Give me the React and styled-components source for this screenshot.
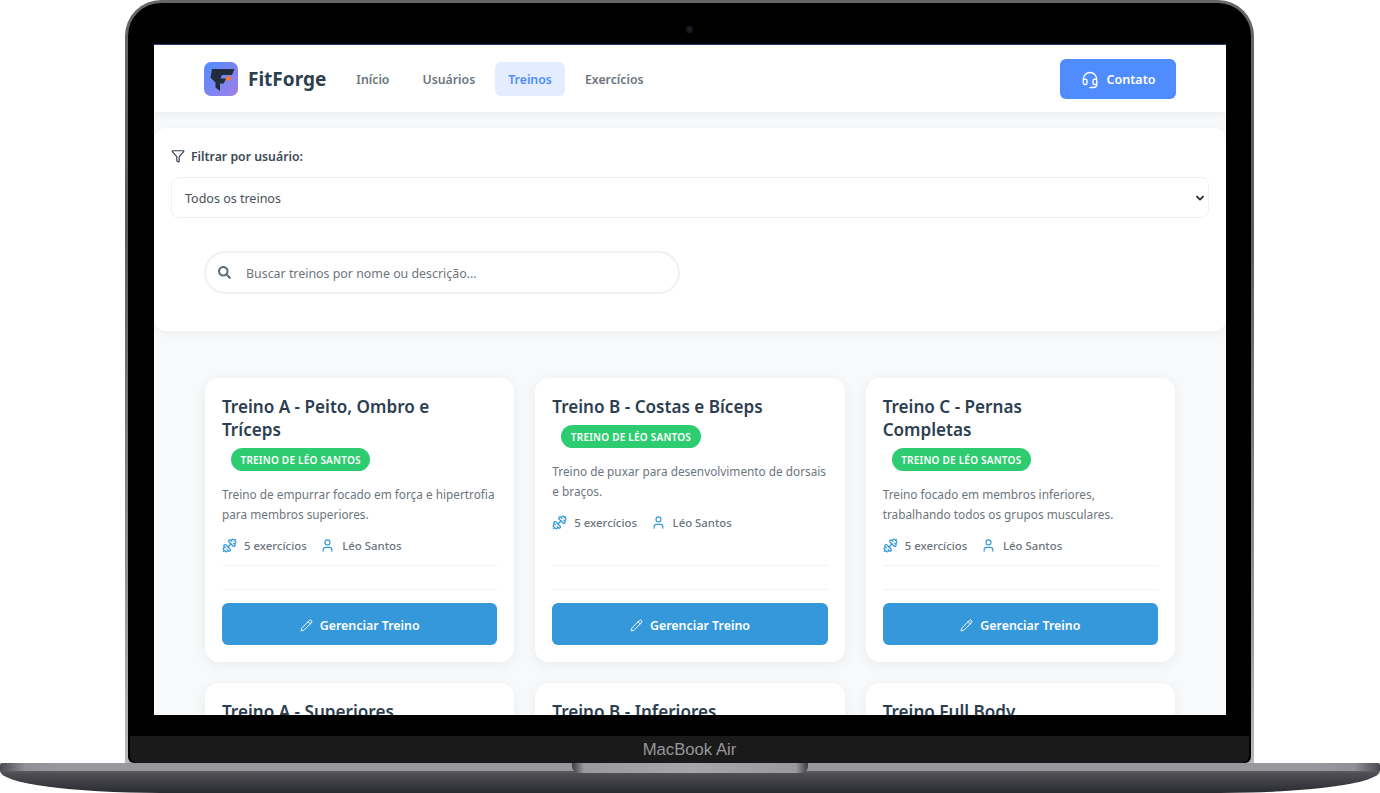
import React from "react";
import styled, { createGlobalStyle } from "styled-components";
import { Funnel, Headset, Dumbbell, User, Pencil } from "lucide-react";
import { FaSearch } from "react-icons/fa";

const Global = createGlobalStyle`
  html, body { margin: 0; padding: 0; background: #fff; }
  body { width: 1380px; height: 793px; overflow: hidden; font-family: "Noto Sans", "Open Sans", sans-serif; }
  * { box-sizing: border-box; }
`;

const chevron = "data:image/svg+xml;utf8,<svg xmlns='http://www.w3.org/2000/svg' width='10' height='6' viewBox='0 0 10 6'><path d='M1.5 1.2 5 4.6 8.5 1.2' fill='none' stroke='%23222' stroke-width='1.7'/></svg>";

const Device = styled.div`
  width: 1380px;
  height: 793px;
  display: flex;
  flex-direction: column;
  align-items: center;
`;
const Lid = styled.div`
  width: 1129px;
  height: 763px;
  flex: none;
  margin-left: -1px;
  padding: 3px 3px 0;
  border-radius: 36px 36px 0 0;
  background: linear-gradient(180deg, #67676b 0%, #5c5c60 30%, #8f8f94 75%, #b9b9bd 100%);
`;
const Bezel = styled.div`
  height: 760px;
  display: flex;
  flex-direction: column;
  border-radius: 33px 33px 6px 6px;
  background: #000;
`;
const CameraBar = styled.div`
  height: 42px;
  flex: none;
  display: flex;
  align-items: center;
  justify-content: center;
  padding-top: 10px;
`;
const Camera = styled.span`
  width: 7px;
  height: 7px;
  border-radius: 50%;
  background: #1d2128;
  box-shadow: inset 0 0 0 1.5px #14161b;
`;
const Screen = styled.div`
  height: 670px;
  flex: none;
  margin: 0 25px 0 26px;
  overflow: hidden;
  background: #f8f9fa;
  box-shadow: 0 -1px 0 rgba(70, 110, 210, 0.55);
`;
const Chin = styled.div`
  height: 27px;
  margin: 21px 2px 0;
  padding-top: 1px;
  flex: none;
  display: flex;
  align-items: center;
  justify-content: center;
  border-radius: 0 0 8px 8px;
  background: #1a1a1a;
  color: #97979a;
  font-family: "Liberation Sans", sans-serif;
  font-size: 16.7px;
`;
const Base = styled.div`
  position: relative;
  width: 1380px;
  height: 30px;
  flex: none;
`;
const BaseTop = styled.div`
  height: 8px;
  border-radius: 2px 2px 0 0;
  background: linear-gradient(90deg, #4a4a50 0, #8f8f95 25px, #98989d 60px, #97979c 1320px, #8f8f95 1355px, #4a4a50 1380px);
`;
const BaseBottom = styled.div`
  height: 22px;
  border-radius: 0 0 160px 160px / 0 0 22px 22px;
  background: linear-gradient(180deg, #5b5b60 0, #4d4d53 3px, #3d3d44 12px, #2a2a31 22px);
`;
const Notch = styled.div`
  position: absolute;
  top: 0;
  left: 572px;
  width: 236px;
  height: 10px;
  border-radius: 0 0 7px 7px;
  background: linear-gradient(90deg, #3d3d42 0, #99999e 12px, #a6a6ab 50%, #99999e 224px, #3d3d42 100%);
`;

const Nav = styled.header`
  height: 67px;
  display: flex;
  align-items: center;
  padding: 0 50px;
  background: #fff;
  box-shadow: 0 2px 10px rgba(0, 0, 0, 0.06);
`;
const Brand = styled.div`
  display: flex;
  align-items: center;
  gap: 10px;
  margin-right: 17px;
  color: #2c3e50;
  font-size: 19px;
  font-weight: 700;
`;
const NavList = styled.nav`
  display: flex;
  gap: 7px;
  flex: 1;
`;
const NavItem = styled.a`
  height: 34px;
  display: flex;
  align-items: center;
  padding: 2px 13px 0;
  border-radius: 6px;
  font-size: 12.3px;
  font-weight: 600;
  color: ${(p) => (p.$active ? "#4f8cff" : "#6c757d")};
  background: ${(p) => (p.$active ? "#e3edff" : "transparent")};
`;
const ContactButton = styled.button`
  width: 116px;
  height: 40px;
  display: flex;
  align-items: center;
  justify-content: center;
  gap: 8px;
  padding: 2px 0 0;
  border: 0;
  border-radius: 6px;
  background: #4f8cff;
  color: #fff;
  font-family: inherit;
  font-size: 12.5px;
  font-weight: 600;
`;

const FilterPanel = styled.section`
  height: 203px;
  margin-top: 16px;
  padding: 17px;
  border-radius: 12px;
  background: #fff;
  box-shadow: 0 2px 8px rgba(0, 0, 0, 0.05);
`;
const FilterLabel = styled.label`
  height: 22px;
  display: flex;
  align-items: center;
  gap: 6px;
  color: #3b4855;
  font-size: 12.3px;
  font-weight: 600;
`;
const Select = styled.select`
  width: 100%;
  height: 41px;
  margin-top: 10px;
  padding: 2px 13px 0;
  appearance: none;
  border: 1px solid #eef0f3;
  border-radius: 8px;
  background: #fff url("${chevron}") no-repeat right 3px center;
  color: #495057;
  font-family: inherit;
  font-size: 12.5px;
  outline: none;
`;
const SearchBox = styled.div`
  width: 476px;
  height: 43px;
  margin: 33px 0 0 33px;
  display: flex;
  align-items: center;
  gap: 15px;
  padding: 2px 12px 0;
  border: 2px solid #eff1f4;
  border-radius: 22px;
  background: #fff;
  color: #6c757d;
  font-size: 12.4px;
`;
const SearchIcon = styled(FaSearch)`
  color: #5f6f7e;
  font-size: 13px;
  flex: none;
  margin-top: -2px;
`;

const CardGrid = styled.div`
  display: grid;
  grid-template-columns: repeat(3, 1fr);
  gap: 21px;
  margin-top: 47px;
  padding: 0 51px;
`;
const Card = styled.article`
  min-height: 284px;
  display: flex;
  flex-direction: column;
  padding: 17px;
  border-radius: 14px;
  background: #fff;
  box-shadow: 0 3px 14px rgba(0, 0, 0, 0.06);
`;
const Title = styled.h3`
  margin: 0;
  padding-right: 50px;
  color: #2c3e50;
  font-size: 17.1px;
  font-weight: 600;
  line-height: 23px;
`;
const Badge = styled.span`
  align-self: flex-start;
  height: 23px;
  display: inline-flex;
  align-items: center;
  margin: 7px 0 0 9px;
  padding: 0 9.5px;
  border-radius: 12px;
  background: #2ecc71;
  color: #fff;
  font-size: 10px;
  font-weight: 600;
  letter-spacing: 0.22px;
`;
const Description = styled.p`
  margin: 13px 0 0;
  color: #6c757d;
  font-size: 11.8px;
  line-height: 20px;
`;
const Meta = styled.div`
  flex: 1;
  display: flex;
  align-items: flex-start;
  gap: 13.5px;
  margin-top: 11px;
  padding-bottom: 10px;
  border-bottom: 1px solid #f1f3f5;
`;
const MetaItem = styled.span`
  height: 20px;
  display: flex;
  align-items: center;
  gap: 7px;
  color: #6c757d;
  font-size: 11.4px;
  font-weight: 500;
`;
const MetaIcon = styled.span`
  display: flex;
  color: #3498db;
`;
const Footer = styled.div`
  margin-top: 23px;
  padding-top: 13px;
  border-top: 1px solid #f1f3f5;
`;
const ManageButton = styled.button`
  width: 100%;
  height: 42px;
  display: flex;
  align-items: center;
  justify-content: center;
  gap: 7px;
  padding: 2px 0 0;
  border: 0;
  border-radius: 6px;
  background: #3498db;
  color: #fff;
  font-family: inherit;
  font-size: 12.4px;
  font-weight: 600;
`;

const Logo = () => (
  <svg width="34" height="34" viewBox="0 0 34 34">
    <defs>
      <linearGradient id="logoGrad" x1="0" y1="0" x2="1" y2="1">
        <stop offset="0" stopColor="#4f8cff" />
        <stop offset="1" stopColor="#a17ee6" />
      </linearGradient>
    </defs>
    <rect width="34" height="34" rx="7" fill="url(#logoGrad)" />
    <path d="M8 7H30.5L28 13H18L16.5 16.5H22L19.8 21.5H16V29L11.5 25.5V20.5L6.5 15.5Z" fill="#1f2d3d" />
    <path d="M23 14.5H27.5L25.7 18.5H21.5Z" fill="#ff7a10" />
  </svg>
);

const workouts = [
  { title: "Treino A - Peito, Ombro e Tríceps", text: "Treino de empurrar focado em força e hipertrofia para membros superiores." },
  { title: "Treino B - Costas e Bíceps", text: "Treino de puxar para desenvolvimento de dorsais e braços." },
  { title: "Treino C - Pernas Completas", text: "Treino focado em membros inferiores, trabalhando todos os grupos musculares." },
  { title: "Treino A - Superiores", text: "Treino para membros superiores." },
  { title: "Treino B - Inferiores", text: "Treino para membros inferiores." },
  { title: "Treino Full Body", text: "Treino para o corpo inteiro." },
];

export default function App() {
  return (
    <>
      <Global />
      <Device>
        <Lid>
          <Bezel>
            <CameraBar><Camera /></CameraBar>
            <Screen>
              <Nav>
                <Brand><Logo />FitForge</Brand>
                <NavList>
                  <NavItem>Início</NavItem>
                  <NavItem>Usuários</NavItem>
                  <NavItem $active>Treinos</NavItem>
                  <NavItem>Exercícios</NavItem>
                </NavList>
                <ContactButton><Headset size={18} strokeWidth={1.8} />Contato</ContactButton>
              </Nav>
              <FilterPanel>
                <FilterLabel><Funnel size={14} strokeWidth={2} color="#2c3e50" />Filtrar por usuário:</FilterLabel>
                <Select defaultValue="all"><option value="all">Todos os treinos</option></Select>
                <SearchBox><SearchIcon />Buscar treinos por nome ou descrição...</SearchBox>
              </FilterPanel>
              <CardGrid>
                {workouts.map((w) => (
                  <Card key={w.title}>
                    <Title>{w.title}</Title>
                    <Badge>TREINO DE LÉO SANTOS</Badge>
                    <Description>{w.text}</Description>
                    <Meta>
                      <MetaItem><MetaIcon><Dumbbell size={15} strokeWidth={2} /></MetaIcon>5 exercícios</MetaItem>
                      <MetaItem><MetaIcon><User size={15} strokeWidth={1.8} /></MetaIcon>Léo Santos</MetaItem>
                    </Meta>
                    <Footer>
                      <ManageButton><Pencil size={13} strokeWidth={1.8} />Gerenciar Treino</ManageButton>
                    </Footer>
                  </Card>
                ))}
              </CardGrid>
            </Screen>
            <Chin>MacBook Air</Chin>
          </Bezel>
        </Lid>
        <Base>
          <BaseTop />
          <BaseBottom />
          <Notch />
        </Base>
      </Device>
    </>
  );
}
